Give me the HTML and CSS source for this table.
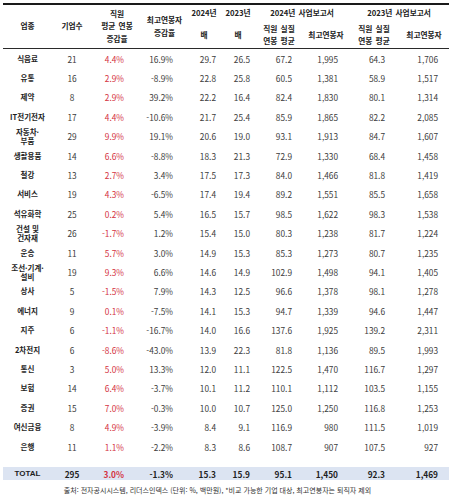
FILE: index.html
```html
<!DOCTYPE html>
<html lang="ko">
<head>
<meta charset="utf-8">
<link rel="stylesheet" href="styles.css">
</head>
<body>
<div class="wrap">
<table class="tbl">
<colgroup>
<col class="c1"><col class="c2"><col class="c3"><col class="c4"><col class="c5"><col class="c6"><col class="c7"><col class="c8"><col class="c9"><col class="c10">
</colgroup>
<thead>
<tr class="h1">
<th rowspan="2">업종</th>
<th rowspan="2">기업수</th>
<th rowspan="2">직원<br>평균 연봉<br>증감율</th>
<th rowspan="2">최고연봉자<br>증감율</th>
<th class="yr">2024년</th>
<th class="yr">2023년</th>
<th colspan="2">2024년 사업보고서</th>
<th colspan="2">2023년 사업보고서</th>
</tr>
<tr class="h2">
<th>배</th>
<th>배</th>
<th>직원 실질<br>연봉 평균</th>
<th>최고연봉자</th>
<th>직원 실질<br>연봉 평균</th>
<th>최고연봉자</th>
</tr>
</thead>
<tbody>
<tr><td class="lab">식음료</td><td>21</td><td class="red">4.4%</td><td>16.9%</td><td>29.7</td><td>26.5</td><td>67.2</td><td>1,995</td><td>64.3</td><td>1,706</td></tr>
<tr><td class="lab">유통</td><td>16</td><td class="red">2.9%</td><td>-8.9%</td><td>22.8</td><td>25.8</td><td>60.5</td><td>1,381</td><td>58.9</td><td>1,517</td></tr>
<tr><td class="lab">제약</td><td>8</td><td class="red">2.9%</td><td>39.2%</td><td>22.2</td><td>16.4</td><td>82.4</td><td>1,830</td><td>80.1</td><td>1,314</td></tr>
<tr><td class="lab">IT전기전자</td><td>17</td><td class="red">4.4%</td><td>-10.6%</td><td>21.7</td><td>25.4</td><td>85.9</td><td>1,865</td><td>82.2</td><td>2,085</td></tr>
<tr><td class="lab two">자동차·<br>부품</td><td>29</td><td class="red">9.9%</td><td>19.1%</td><td>20.6</td><td>19.0</td><td>93.1</td><td>1,913</td><td>84.7</td><td>1,607</td></tr>
<tr><td class="lab">생활용품</td><td>14</td><td class="red">6.6%</td><td>-8.8%</td><td>18.3</td><td>21.3</td><td>72.9</td><td>1,330</td><td>68.4</td><td>1,458</td></tr>
<tr><td class="lab">철강</td><td>13</td><td class="red">2.7%</td><td>3.4%</td><td>17.5</td><td>17.3</td><td>84.0</td><td>1,466</td><td>81.8</td><td>1,419</td></tr>
<tr><td class="lab">서비스</td><td>19</td><td class="red">4.3%</td><td>-6.5%</td><td>17.4</td><td>19.4</td><td>89.2</td><td>1,551</td><td>85.5</td><td>1,658</td></tr>
<tr><td class="lab">석유화학</td><td>25</td><td class="red">0.2%</td><td>5.4%</td><td>16.5</td><td>15.7</td><td>98.5</td><td>1,622</td><td>98.3</td><td>1,538</td></tr>
<tr><td class="lab two">건설 및<br>건자재</td><td>26</td><td class="red">-1.7%</td><td>1.2%</td><td>15.4</td><td>15.0</td><td>80.3</td><td>1,238</td><td>81.7</td><td>1,224</td></tr>
<tr><td class="lab">운송</td><td>11</td><td class="red">5.7%</td><td>3.0%</td><td>14.9</td><td>15.3</td><td>85.3</td><td>1,273</td><td>80.7</td><td>1,235</td></tr>
<tr><td class="lab two">조선·기계·<br>설비</td><td>19</td><td class="red">9.3%</td><td>6.6%</td><td>14.6</td><td>14.9</td><td>102.9</td><td>1,498</td><td>94.1</td><td>1,405</td></tr>
<tr><td class="lab">상사</td><td>5</td><td class="red">-1.5%</td><td>7.9%</td><td>14.3</td><td>12.5</td><td>96.6</td><td>1,378</td><td>98.1</td><td>1,278</td></tr>
<tr><td class="lab">에너지</td><td>9</td><td class="red">0.1%</td><td>-7.5%</td><td>14.1</td><td>15.3</td><td>94.7</td><td>1,339</td><td>94.6</td><td>1,447</td></tr>
<tr><td class="lab">지주</td><td>6</td><td class="red">-1.1%</td><td>-16.7%</td><td>14.0</td><td>16.6</td><td>137.6</td><td>1,925</td><td>139.2</td><td>2,311</td></tr>
<tr><td class="lab">2차전지</td><td>6</td><td class="red">-8.6%</td><td>-43.0%</td><td>13.9</td><td>22.3</td><td>81.8</td><td>1,136</td><td>89.5</td><td>1,993</td></tr>
<tr><td class="lab">통신</td><td>3</td><td class="red">5.0%</td><td>13.3%</td><td>12.0</td><td>11.1</td><td>122.5</td><td>1,470</td><td>116.7</td><td>1,297</td></tr>
<tr><td class="lab">보험</td><td>14</td><td class="red">6.4%</td><td>-3.7%</td><td>10.1</td><td>11.2</td><td>110.1</td><td>1,112</td><td>103.5</td><td>1,155</td></tr>
<tr><td class="lab">증권</td><td>15</td><td class="red">7.0%</td><td>-0.3%</td><td>10.0</td><td>10.7</td><td>125.0</td><td>1,250</td><td>116.8</td><td>1,253</td></tr>
<tr><td class="lab">여신금융</td><td>8</td><td class="red">4.9%</td><td>-3.9%</td><td>8.4</td><td>9.1</td><td>116.9</td><td>980</td><td>111.5</td><td>1,019</td></tr>
<tr><td class="lab">은행</td><td>11</td><td class="red">1.1%</td><td>-2.2%</td><td>8.3</td><td>8.6</td><td>108.7</td><td>907</td><td>107.5</td><td>927</td></tr>
<tr class="spacer"><td colspan="10"></td></tr>
<tr class="total"><td class="lab">TOTAL</td><td>295</td><td class="red">3.0%</td><td>-1.3%</td><td>15.3</td><td>15.9</td><td>95.1</td><td>1,450</td><td>92.3</td><td>1,469</td></tr>
</tbody>
</table>
<p class="note">출처: 전자공시시스템, 리더스인덱스 (단위: %, 백만원), *비교 가능한 기업 대상, 최고연봉자는 퇴직자 제외</p>
</div>
</body>
</html>
```
FILE: styles.css
```css
html, body {
  margin: 0;
  padding: 0;
  background: #ffffff;
}
body {
  font-family: "Noto Sans CJK KR", "Noto Sans", sans-serif;
  color: #3a3a3a;
}
.wrap {
  width: 451px;
  height: 500px;
  padding-top: 3px;
  box-sizing: border-box;
}
.tbl {
  margin-left: 3px;
  width: 446px;
  border-collapse: collapse;
  table-layout: fixed;
}
.c1 { width: 49px; }
.c2 { width: 40px; }
.c3 { width: 50px; }
.c4 { width: 45px; }
.c5 { width: 34px; }
.c6 { width: 34px; }
.c7 { width: 48px; }
.c8 { width: 46px; }
.c9 { width: 50px; }
.c10 { width: 50px; }
.tbl thead {
  border-top: 2px solid #1a1a1a;
  border-bottom: 1px solid #2a2a2a;
}
.tbl th {
  font-size: 7.7px;
  line-height: 12.5px;
  font-weight: 700;
  color: #222222;
  text-align: center;
  vertical-align: middle;
  padding: 0;
  white-space: nowrap;
  word-spacing: 1px;
}
.h1 th { height: 17px; }
.h2 th { height: 26px; }
.tbl td {
  height: 19.4px;
  padding: 0;
  font-size: 8.3px;
  line-height: 10px;
  vertical-align: middle;
  text-align: right;
  white-space: nowrap;
  color: #3c3c3c;
}
.tbl td:nth-child(1) { text-align: center; }
.tbl td:nth-child(2) { text-align: center; }
.tbl td:nth-child(3) { padding-right: 18px; }
.tbl td:nth-child(4) { padding-right: 14px; }
.tbl td:nth-child(5) { padding-right: 5px; }
.tbl td:nth-child(6) { padding-right: 5px; }
.tbl td:nth-child(7) { padding-right: 11px; }
.tbl td:nth-child(8) { padding-right: 11px; }
.tbl td:nth-child(9) { padding-right: 14px; }
.tbl td:nth-child(10) { padding-right: 11px; }
.tbl td.lab {
  font-size: 7.5px;
  font-weight: 700;
  color: #1e1e1e;
}
.tbl td.two {
  line-height: 9px;
}
.tbl td.red {
  color: #d4323f;
}
.spacer td {
  height: 11px;
}
.total td {
  height: 13px;
  background: #dce4f2;
  font-weight: 700;
  color: #1e1e1e;
}
.total td.lab {
  font-size: 8px;
  font-family: "Liberation Sans", "Noto Sans", sans-serif;
}
.total td.red {
  color: #d4323f;
}
.note {
  margin: 5px 16px 0 0;
  font-size: 7px;
  line-height: 11px;
  text-align: center;
  color: #333333;
}
```
